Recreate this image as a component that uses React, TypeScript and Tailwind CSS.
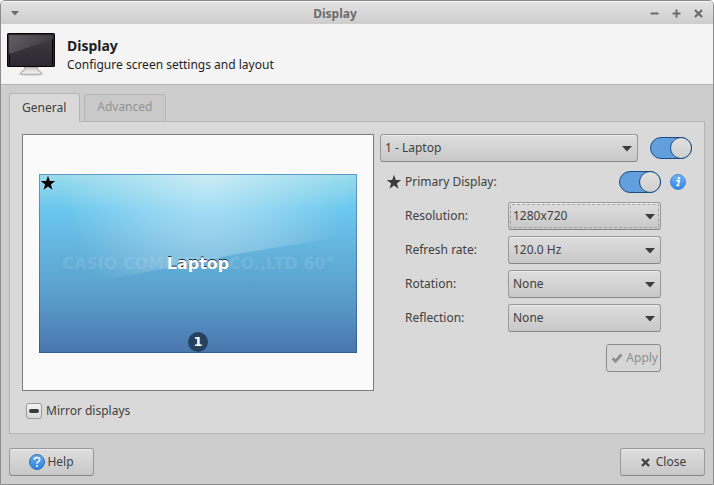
import { useEffect, useRef, useState } from "react";
import type { ReactNode } from "react";

const buttonStyle =
  "flex h-7 items-center justify-center rounded-[3px] border border-[#999] border-b-[#868686] bg-linear-to-b from-[#dedede] to-[#c8c8c8] shadow-[inset_0_1px_0_#ececec]";

function Star({ className }: { className: string }) {
  return (
    <svg viewBox="0 0 16 16" className={className} fill="currentColor" aria-hidden="true">
      <path d="M8 .8 9.8 6H15.2L10.9 9.4 12.5 14.8 8 11.6 3.5 14.8 5.1 9.4.8 6H6.2Z" />
    </svg>
  );
}

function MonitorIcon() {
  return (
    <svg viewBox="0 0 48 48" className="mb-[3px] size-12 self-end" aria-hidden="true">
      <defs>
        <linearGradient id="screen" x1="0" y1="0" x2="0" y2="1">
          <stop offset="0" stopColor="#3e3a42" />
          <stop offset="1" stopColor="#2f2835" />
        </linearGradient>
        <linearGradient id="shine" x1="0" y1="0" x2="1" y2="0.4">
          <stop offset="0" stopColor="#68666a" />
          <stop offset="1" stopColor="#403b44" />
        </linearGradient>
        <linearGradient id="stand" x1="0" y1="0" x2="0" y2="1">
          <stop offset="0" stopColor="#8f8f8f" />
          <stop offset="0.4" stopColor="#dadada" />
          <stop offset="1" stopColor="#f6f6f6" />
        </linearGradient>
      </defs>
      <ellipse cx="24" cy="41" rx="13" ry="2" fill="#000" opacity="0.1" />
      <path d="M17.5 33h13l.4 4.5 3 1.5v2.2H14.1V39l3-1.5Z" fill="url(#stand)" stroke="#929292" strokeWidth="0.8" />
      <rect x="0" y="0" width="48" height="34" rx="1.5" fill="#060606" />
      <rect x="1.5" y="1.5" width="45" height="31" fill="none" stroke="#2c292e" />
      <rect x="3" y="3" width="42" height="29" fill="url(#screen)" />
      <path d="M2 2h44v4L2 21Z" fill="url(#shine)" opacity="0.85" />
    </svg>
  );
}

function Wallpaper() {
  return (
    <svg viewBox="0 0 318 179" preserveAspectRatio="none" className="absolute inset-0 size-full" aria-hidden="true">
      <defs>
        <linearGradient id="sky" x1="0" y1="0" x2="0" y2="1">
          <stop offset="0" stopColor="#9bdcec" />
          <stop offset="0.2" stopColor="#6ac7ee" />
          <stop offset="0.37" stopColor="#66b8e1" />
          <stop offset="0.6" stopColor="#5ca5d0" />
          <stop offset="0.75" stopColor="#5796c5" />
          <stop offset="1" stopColor="#4975ad" />
        </linearGradient>
        <radialGradient id="glare" gradientUnits="userSpaceOnUse" cx="0" cy="0" r="1" gradientTransform="translate(168 0) scale(145 165)">
          <stop offset="0" stopColor="#fff" stopOpacity="0.48" />
          <stop offset="0.5" stopColor="#fff" stopOpacity="0.25" />
          <stop offset="1" stopColor="#fff" stopOpacity="0" />
        </radialGradient>
        <linearGradient id="edge" x1="0" y1="0" x2="0" y2="1">
          <stop offset="0" stopColor="#5c9ac8" />
          <stop offset="1" stopColor="#315d9b" />
        </linearGradient>
      </defs>
      <rect width="318" height="179" fill="url(#sky)" />
      <path d="M0 0H318V59L283 66 203 79 123 95 68 105 0 116Z" fill="url(#glare)" />
      <rect x="0.5" y="0.5" width="317" height="178" fill="none" stroke="url(#edge)" />
    </svg>
  );
}

function Switch({ label }: { label: string }) {
  const [on, setOn] = useState(true);
  return (
    <input
      type="checkbox"
      role="switch"
      aria-label={label}
      checked={on}
      onChange={() => setOn(!on)}
      className="relative h-[22px] w-[42px] shrink-0 appearance-none rounded-full border border-[#8c8c8c] bg-[#bdbdbd] before:absolute before:-top-px before:-left-px before:size-[22px] before:rounded-full before:border before:border-[#8c8c8c] before:bg-linear-to-b before:from-[#e0e0e0] before:to-[#d0d0d0] checked:border-[#1d4f85] checked:bg-[#639fdd] checked:before:left-[19px] checked:before:border-[#1d4f85]"
    />
  );
}

type SelectProps = {
  id: string;
  options: string[];
  label?: string;
  focused?: boolean;
};

function Select({ id, options, label, focused }: SelectProps) {
  return (
    <div className="relative">
      <select
        id={id}
        aria-label={label}
        className="block h-7 w-full appearance-none rounded-[3px] border border-[#999] border-b-[#868686] bg-linear-to-b from-[#dedede] to-[#c8c8c8] pr-6 pl-1 pb-px text-[#404040] shadow-[inset_0_1px_0_#ececec] outline-none"
      >
        {options.map((o) => (
          <option key={o}>{o}</option>
        ))}
      </select>
      {focused && (
        <span className="pointer-events-none absolute inset-0.5 rounded-xs border border-dashed border-[#a2a2a2]" />
      )}
      <svg viewBox="0 0 10 6" className="pointer-events-none absolute top-3 right-1.5 h-1.5 w-2.5" aria-hidden="true">
        <path d="M0 0h10L5 5.5Z" fill="#3c3c3c" />
      </svg>
    </div>
  );
}

function Field({ id, label, children }: { id: string; label: string; children: ReactNode }) {
  return (
    <div className="flex items-center pl-[25px] pr-[31px]">
      <label htmlFor={id} className="w-[103px] shrink-0">
        {label}
      </label>
      <div className="flex-1">{children}</div>
    </div>
  );
}

function TitleBar() {
  return (
    <div className="flex h-[23px] items-center bg-linear-to-b from-[#e4e4e4] to-[#cdcdcd] px-2.5 pt-0.5 text-[#6c6c6c] shadow-[inset_0_1px_0_#f4f4f4]">
      <button aria-label="Window menu">
        <svg viewBox="0 0 8 5" className="h-[5px] w-2">
          <path d="M0 0h8L4 4.5Z" fill="currentColor" />
        </svg>
      </button>
      <div className="flex-1 text-center font-bold">Display</div>
      <div className="flex w-[52px] justify-end gap-[13px]">
        <button aria-label="Minimize">
          <svg viewBox="0 0 9 9" className="size-[9px]">
            <path d="M.5 4.5h8" stroke="currentColor" strokeWidth="2" />
          </svg>
        </button>
        <button aria-label="Maximize">
          <svg viewBox="0 0 9 9" className="size-[9px]">
            <path d="M.5 4.5h8M4.5.5v8" stroke="currentColor" strokeWidth="2" />
          </svg>
        </button>
        <button aria-label="Close window">
          <svg viewBox="0 0 9 9" className="size-[9px]">
            <path d="m1 1 7 7M8 1 1 8" stroke="currentColor" strokeWidth="2.2" />
          </svg>
        </button>
      </div>
    </div>
  );
}

function Preview() {
  return (
    <div className="flex h-[257px] items-center border border-[#7d7d7d] bg-[#fafafa] px-4 pt-0.5">
      <div className="relative h-[179px] flex-1 font-['DejaVu_Sans',sans-serif] font-bold">
        <Wallpaper />
        <Star className="absolute top-px left-px size-4 text-black" />
        <div className="absolute inset-0 flex items-center justify-center text-base whitespace-nowrap text-white/10">
          CASIO COMPUTER CO.,LTD 60"
        </div>
        <div className="absolute inset-0 flex items-center justify-center text-base text-white [text-shadow:0_-1px_0_#203040]">
          Laptop
        </div>
        <div className="absolute inset-x-0 bottom-px flex justify-center">
          <span className="flex size-5 items-center justify-center rounded-full bg-[#24425f] text-[13px] text-white">
            1
          </span>
        </div>
      </div>
    </div>
  );
}

export default function App() {
  const mirror = useRef<HTMLInputElement>(null);
  const [tab, setTab] = useState("General");

  useEffect(() => {
    if (mirror.current) mirror.current.indeterminate = true;
  }, []);

  return (
    <div className="flex min-h-screen flex-col overflow-hidden rounded-t-[5px] border border-[#8c8c8c] bg-[#cdcdcd] font-['Noto_Sans',sans-serif] text-xs text-[#404040]">
      <TitleBar />

      <header className="flex h-[61px] items-center border-b border-[#b2b2b2] bg-[#f4f4f4] pl-1.5 text-[#1e1e1e]">
        <MonitorIcon />
        <div className="pt-0.5 pl-3">
          <h1 className="text-sm leading-5 font-bold">Display</h1>
          <p className="leading-[18px]">Configure screen settings and layout</p>
        </div>
      </header>

      <main className="flex flex-1 flex-col px-2 pt-2">
        <div role="tablist" className="z-10 -mb-px flex items-end gap-1">
          {["General", "Advanced"].map((t) => (
            <button
              key={t}
              role="tab"
              aria-selected={tab === t}
              onClick={() => setTab(t)}
              className="h-7 rounded-t-[3px] border border-[#b5b5b5] bg-[#c9c9c9] pr-[13px] pb-0.5 pl-3 text-[#939393] aria-selected:h-[29px] aria-selected:border-b-0 aria-selected:bg-[#d9d9d9] aria-selected:pb-0 aria-selected:text-[#404040]"
            >
              {t}
            </button>
          ))}
        </div>

        <section className="flex gap-1.5 border border-[#b5b5b5] bg-[#d9d9d9] p-3 pb-3.5">
          <div className="flex-1">
            <Preview />
            <label className="flex items-center gap-1 pt-3 pl-1 leading-4">
              <input
                ref={mirror}
                type="checkbox"
                className="flex size-4 appearance-none items-center justify-center rounded-[3px] border border-[#999] bg-linear-to-b from-[#f4f4f4] to-[#d8d8d8] indeterminate:before:h-1 indeterminate:before:w-2.5 indeterminate:before:rounded-xs indeterminate:before:bg-[#3a3a3a]"
              />
              Mirror displays
            </label>
          </div>

          <div className="flex w-[312px] shrink-0 flex-col gap-1.5">
            <div className="flex items-center gap-3">
              <div className="flex-1">
                <Select id="output" label="Output" options={["1 - Laptop"]} />
              </div>
              <Switch label="Enable display" />
            </div>

            <div className="flex h-7 items-center pl-1.5 pr-1.5">
              <Star className="mr-[3px] size-4 text-[#3c3c3c]" />
              <span className="flex-1">Primary Display:</span>
              <Switch label="Primary Display" />
              <button aria-label="About the primary display" className="ml-[9px]">
                <svg viewBox="0 0 16 16" className="size-4">
                  <defs>
                    <linearGradient id="info" x1="0" y1="0" x2="0" y2="1">
                      <stop offset="0" stopColor="#71b5f8" />
                      <stop offset="1" stopColor="#2e83ea" />
                    </linearGradient>
                  </defs>
                  <circle cx="8" cy="8" r="7.5" fill="url(#info)" stroke="#4889d5" />
                  <circle cx="8.9" cy="4.2" r="1.3" fill="#fff" />
                  <path d="M6.2 6.7h3L8 11.6h1.4M6.2 11.6H8" fill="none" stroke="#fff" strokeWidth="1.5" />
                </svg>
              </button>
            </div>

            <Field id="resolution" label="Resolution:">
              <Select id="resolution" options={["1280x720"]} focused />
            </Field>
            <Field id="rate" label="Refresh rate:">
              <Select id="rate" options={["120.0 Hz"]} />
            </Field>
            <Field id="rotation" label="Rotation:">
              <Select id="rotation" options={["None"]} />
            </Field>
            <Field id="reflection" label="Reflection:">
              <Select id="reflection" options={["None"]} />
            </Field>

            <div className="flex justify-end pt-1.5 pr-[31px]">
              <button
                disabled
                className="flex h-7 items-center gap-[3px] rounded-[3px] border border-[#8c8c8c] bg-[#d6d6d6] pr-0.5 pl-1 text-[#8e8e8e]"
              >
                <svg viewBox="0 0 12 12" className="size-3" aria-hidden="true">
                  <path d="m1.5 6.2 3 3 6-6.7" fill="none" stroke="currentColor" strokeWidth="2.8" />
                </svg>
                Apply
              </button>
            </div>
          </div>
        </section>

        <footer className="flex justify-between pt-3.5 pb-2">
          <button className={`${buttonStyle} w-[85px] gap-0.5`}>
            <svg viewBox="0 0 16 16" className="size-4" aria-hidden="true">
              <defs>
                <linearGradient id="help" x1="0" y1="0" x2="0" y2="1">
                  <stop offset="0" stopColor="#6aaceb" />
                  <stop offset="1" stopColor="#2b83e2" />
                </linearGradient>
              </defs>
              <circle cx="8" cy="8" r="7.5" fill="url(#help)" stroke="#3270b4" />
              <path d="M5.2 5.7Q5.3 3.4 8 3.4t2.8 2.1Q10.8 6.9 9 7.8 8 8.4 8 9.8" fill="none" stroke="#fff" strokeWidth="1.5" />
              <circle cx="8" cy="12" r="1" fill="#fff" />
            </svg>
            Help
          </button>
          <button className={`${buttonStyle} w-[85px] gap-1.5 pl-0.5`}>
            <svg viewBox="0 0 9 9" className="size-[9px]" aria-hidden="true">
              <path d="m1 1 7 7M8 1 1 8" stroke="currentColor" strokeWidth="2.4" />
            </svg>
            Close
          </button>
        </footer>
      </main>
    </div>
  );
}
